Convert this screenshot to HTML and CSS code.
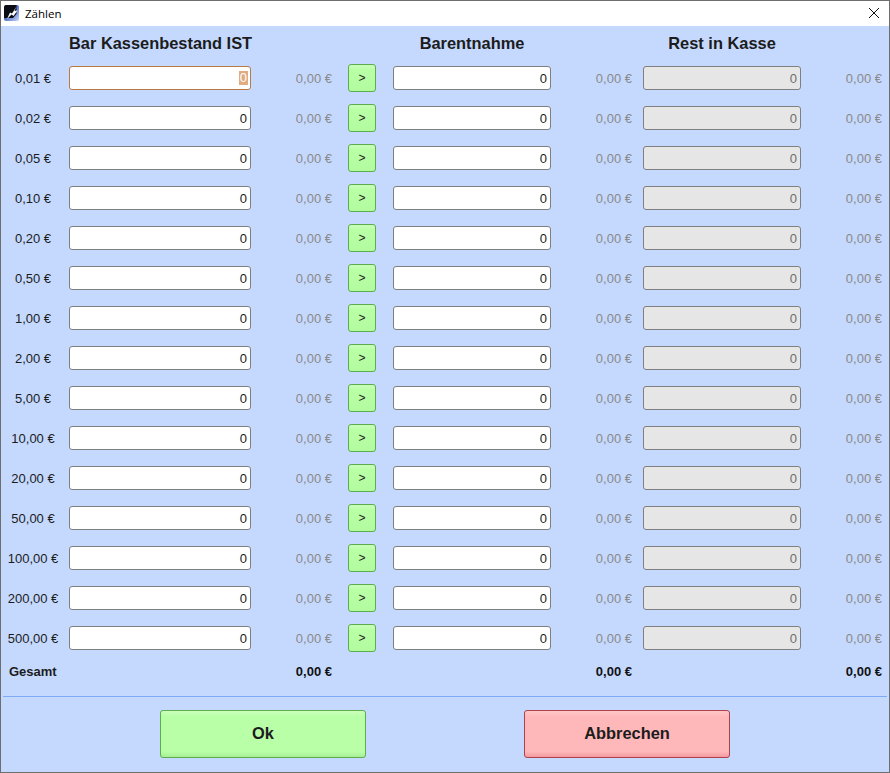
FILE: index.html
```html
<!DOCTYPE html>
<html lang="de">
<head>
<meta charset="utf-8">
<title>Zählen</title>
<link rel="stylesheet" href="styles.css">
</head>
<body>
<div class="window">
  <header class="titlebar">
    <svg class="app-icon" viewBox="0 0 15 16" width="15" height="16" aria-hidden="true">
      <defs><linearGradient id="ig" x1="0" y1="0" x2="1" y2="1"><stop offset="0.45" stop-color="#4f6fc0"/><stop offset="1" stop-color="#c9dafc"/></linearGradient></defs>
      <rect x="0" y="0" width="15" height="16" rx="2" fill="url(#ig)"/>
      <path d="M1.5 0 H12.5 V9 L9 13 H0 V1.5 Z" fill="#0b0d14"/>
      <path d="M12.5 1.5 L10.5 6 L13.5 5.5 L9.5 11 L7.5 9.5 L3 14 L6 7.5 L8 8.5 Z" fill="#fff"/>
    </svg>
    <span class="title">Zählen</span>
    <svg class="close" viewBox="0 0 10 10" width="10" height="10" aria-hidden="true"><path d="M0 0 L10 10 M10 0 L0 10" stroke="#111" stroke-width="1" fill="none"/></svg>
  </header>
  <main class="content">
    <form class="grid">
      <div class="head c-a">Bar Kassenbestand IST</div>
      <div class="head c-b">Barentnahme</div>
      <div class="head c-c">Rest in Kasse</div>

      <div class="label">0,01 €</div><div class="field f-a focus"><span class="sel">0</span></div><div class="amount">0,00 €</div><button type="button" class="go">&gt;</button><input class="field f-b" value="0"><div class="amount">0,00 €</div><input class="field f-c off" value="0" readonly><div class="amount">0,00 €</div>
      <div class="label">0,02 €</div><input class="field f-a" value="0"><div class="amount">0,00 €</div><button type="button" class="go">&gt;</button><input class="field f-b" value="0"><div class="amount">0,00 €</div><input class="field f-c off" value="0" readonly><div class="amount">0,00 €</div>
      <div class="label">0,05 €</div><input class="field f-a" value="0"><div class="amount">0,00 €</div><button type="button" class="go">&gt;</button><input class="field f-b" value="0"><div class="amount">0,00 €</div><input class="field f-c off" value="0" readonly><div class="amount">0,00 €</div>
      <div class="label">0,10 €</div><input class="field f-a" value="0"><div class="amount">0,00 €</div><button type="button" class="go">&gt;</button><input class="field f-b" value="0"><div class="amount">0,00 €</div><input class="field f-c off" value="0" readonly><div class="amount">0,00 €</div>
      <div class="label">0,20 €</div><input class="field f-a" value="0"><div class="amount">0,00 €</div><button type="button" class="go">&gt;</button><input class="field f-b" value="0"><div class="amount">0,00 €</div><input class="field f-c off" value="0" readonly><div class="amount">0,00 €</div>
      <div class="label">0,50 €</div><input class="field f-a" value="0"><div class="amount">0,00 €</div><button type="button" class="go">&gt;</button><input class="field f-b" value="0"><div class="amount">0,00 €</div><input class="field f-c off" value="0" readonly><div class="amount">0,00 €</div>
      <div class="label">1,00 €</div><input class="field f-a" value="0"><div class="amount">0,00 €</div><button type="button" class="go">&gt;</button><input class="field f-b" value="0"><div class="amount">0,00 €</div><input class="field f-c off" value="0" readonly><div class="amount">0,00 €</div>
      <div class="label">2,00 €</div><input class="field f-a" value="0"><div class="amount">0,00 €</div><button type="button" class="go">&gt;</button><input class="field f-b" value="0"><div class="amount">0,00 €</div><input class="field f-c off" value="0" readonly><div class="amount">0,00 €</div>
      <div class="label">5,00 €</div><input class="field f-a" value="0"><div class="amount">0,00 €</div><button type="button" class="go">&gt;</button><input class="field f-b" value="0"><div class="amount">0,00 €</div><input class="field f-c off" value="0" readonly><div class="amount">0,00 €</div>
      <div class="label">10,00 €</div><input class="field f-a" value="0"><div class="amount">0,00 €</div><button type="button" class="go">&gt;</button><input class="field f-b" value="0"><div class="amount">0,00 €</div><input class="field f-c off" value="0" readonly><div class="amount">0,00 €</div>
      <div class="label">20,00 €</div><input class="field f-a" value="0"><div class="amount">0,00 €</div><button type="button" class="go">&gt;</button><input class="field f-b" value="0"><div class="amount">0,00 €</div><input class="field f-c off" value="0" readonly><div class="amount">0,00 €</div>
      <div class="label">50,00 €</div><input class="field f-a" value="0"><div class="amount">0,00 €</div><button type="button" class="go">&gt;</button><input class="field f-b" value="0"><div class="amount">0,00 €</div><input class="field f-c off" value="0" readonly><div class="amount">0,00 €</div>
      <div class="label">100,00 €</div><input class="field f-a" value="0"><div class="amount">0,00 €</div><button type="button" class="go">&gt;</button><input class="field f-b" value="0"><div class="amount">0,00 €</div><input class="field f-c off" value="0" readonly><div class="amount">0,00 €</div>
      <div class="label">200,00 €</div><input class="field f-a" value="0"><div class="amount">0,00 €</div><button type="button" class="go">&gt;</button><input class="field f-b" value="0"><div class="amount">0,00 €</div><input class="field f-c off" value="0" readonly><div class="amount">0,00 €</div>
      <div class="label">500,00 €</div><input class="field f-a" value="0"><div class="amount">0,00 €</div><button type="button" class="go">&gt;</button><input class="field f-b" value="0"><div class="amount">0,00 €</div><input class="field f-c off" value="0" readonly><div class="amount">0,00 €</div>

      <div class="total-label">Gesamt</div>
      <div class="amount total t-a">0,00 €</div>
      <div class="amount total t-b">0,00 €</div>
      <div class="amount total t-c">0,00 €</div>
    </form>
    <hr class="rule">
    <footer class="actions">
      <button type="button" class="action ok">Ok</button>
      <button type="button" class="action cancel">Abbrechen</button>
    </footer>
  </main>
</div>
</body>
</html>
```
FILE: styles.css
```css
* { box-sizing: border-box; }
html, body { margin: 0; height: 100%; }
body { font-family: "Liberation Sans", Arial, sans-serif; color: #1c1c1c; background: #c5d9ff; }
.window { width: 890px; height: 773px; border: 1px solid #6e6e6e; display: flex; flex-direction: column; overflow: hidden; }
.titlebar { height: 25px; background: #fff; display: flex; align-items: center; padding: 0 10px 1px 3px; flex: none; }
.app-icon { flex: none; }
.title { margin-left: 6px; font: 11.5px "Open Sans", "Liberation Sans", sans-serif; color: #000; }
.close { margin-left: auto; }
.content { flex: 1; background: #c5d9ff; display: flex; flex-direction: column; }
.grid { display: grid; grid-template-columns: 64px 4px 182px 81px 16px 28px 17px 158px 81px 11px 158px 81px; grid-template-rows: 32px repeat(15, 40px) 38px; align-items: center; }
.head { font-size: 16.4px; font-weight: 700; text-align: center; white-space: nowrap; grid-row: 1; padding-top: 7px; align-self: stretch; line-height: 20px; }
.c-a { grid-column: 1 / span 3; padding-left: 68px; }
.c-b { grid-column: 8; }
.c-c { grid-column: 11; }
.label { grid-column: 1; font-size: 13px; text-align: center; white-space: nowrap; }
.field { height: 24px; width: 100%; padding: 0 3px 0 4px; border: 1px solid #7f7f7f; border-radius: 3px; background: #fff; font: 13px "Liberation Sans", sans-serif; color: #1c1c1c; text-align: right; outline: none; }
.f-a { grid-column: 3; }
.f-b { grid-column: 8; }
.f-c { grid-column: 11; }
.off { background: #e6e6e6; color: #6e6e6e; }
.focus { border-color: #b87a45; display: flex; justify-content: flex-end; align-items: center; padding-right: 2px; }
.sel { background: #e2ab80; color: #fff; line-height: 14px; padding: 0 1px; }
.amount { font-size: 13px; color: #8a8a8a; text-align: right; white-space: nowrap; }
.go { grid-column: 6; width: 28px; height: 28px; padding: 0; border: 1px solid #5cae4a; border-radius: 3px; background: linear-gradient(#ccffbc, #b8ffa6 20%, #b3fb9f); color: #1c1c1c; font: 12px "Liberation Sans", sans-serif; }
.total-label { grid-column: 1 / span 3; font-size: 13px; font-weight: 700; padding-left: 8px; align-self: start; line-height: 28px; }
.total { font-weight: 700; color: #111; align-self: start; line-height: 28px; }
.t-a { grid-column: 4; grid-row: 17; }
.t-b { grid-column: 9; grid-row: 17; }
.t-c { grid-column: 12; grid-row: 17; }
.rule { margin: 0 2px; height: 1px; border: 0; background: #7fabf5; flex: none; }
.actions { display: flex; justify-content: center; gap: 158px; padding-top: 13px; }
.action { width: 206px; height: 48px; padding: 0 0 2px; border-radius: 3px; font: 700 16.4px "Liberation Sans", sans-serif; color: #1c1c1c; }
.ok { border: 1px solid #5cae4a; background: linear-gradient(#ccffbc, #b9ffa8 12%, #b9ffa8 88%, #a8ef94); }
.cancel { border: 1px solid #b0404a; background: linear-gradient(#ffc8c8, #ffb8ba 12%, #ffb8ba 88%, #f29a9f); }
```
